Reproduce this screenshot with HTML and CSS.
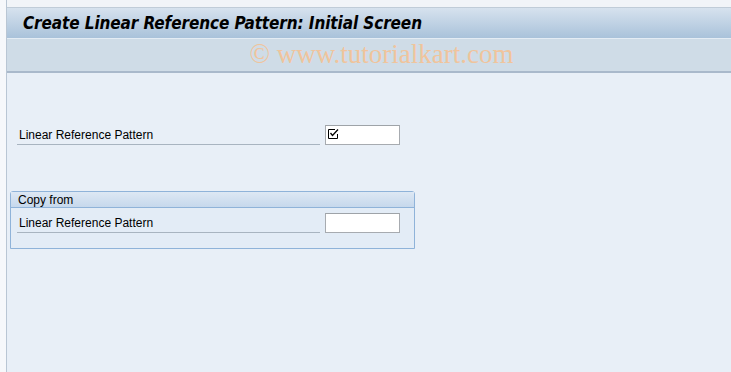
FILE: index.html
```html
<!DOCTYPE html>
<html>
<head>
<meta charset="utf-8">
<link rel="stylesheet" href="styles.css">
</head>
<body>
<div class="frame">
  <div class="topstrip"></div>
  <div class="titlebar"><span class="title">Create Linear Reference Pattern: Initial Screen</span></div>
  <div class="toolbar"><span class="watermark">© www.tutorialkart.com</span></div>
  <div class="content">
    <div class="row first">
      <span class="label">Linear Reference Pattern</span>
      <span class="input">
        <svg class="chk" width="11" height="11" viewBox="0 0 11 11">
          <path d="M0.5 1.5 H7 M0.5 1.5 V10.5 H9.5 V6" fill="none" stroke="#000" stroke-width="1"/>
          <path d="M2.5 5 L4.5 7.5 L10 1.5" fill="none" stroke="#000" stroke-width="1.3"/>
        </svg>
      </span>
    </div>
    <div class="group">
      <div class="ghead">Copy from</div>
      <div class="gbody">
        <div class="row">
          <span class="label">Linear Reference Pattern</span>
          <span class="input"></span>
        </div>
      </div>
    </div>
  </div>
</div>
</body>
</html>
```
FILE: styles.css
```css
html, body { margin: 0; padding: 0; height: 100%; }
body { background: #f6f8fb; font-family: Tahoma, "DejaVu Sans", sans-serif; }
.frame {
  margin-left: 6px;
  height: 372px;
  border-left: 1px solid #b9c6d4;
  display: flex;
  flex-direction: column;
  overflow: hidden;
}
.topstrip { height: 7px; background: #f1f4f8; border-bottom: 1px solid #c0ccd8; }
.titlebar {
  height: 30px;
  background: linear-gradient(#d6e2ee, #a9c2da);
  display: flex;
  align-items: center;
  padding-left: 16px;
  border-bottom: 1px solid #e4ecf4;
}
.title {
  font-family: "DejaVu Sans Condensed", "DejaVu Sans", sans-serif;
  font-weight: bold;
  font-style: italic;
  font-size: 17px;
  color: #000;
  letter-spacing: -0.1px;
}
.toolbar {
  height: 32px;
  background: #cfdce7;
  border-bottom: 2px solid #a9b9cb;
  display: flex;
  align-items: center;
  justify-content: center;
}
.watermark {
  font-family: "Liberation Serif", serif;
  font-size: 27px;
  color: #f0c49c;
  margin-left: 25px;
  margin-top: -2px;
}
.content {
  flex: 1;
  background: #e8eff7;
  padding: 52px 0 0 3px;
}
.row {
  display: flex;
  align-items: flex-end;
  width: 383px;
  height: 20px;
  font-family: "Liberation Sans", Arial, sans-serif;
  font-size: 12px;
  color: #000;
}
.row.first { margin-left: 7px; }
.label {
  width: 303px;
  padding: 2px 0 0 2px;
  box-sizing: border-box;
  border-bottom: 1px solid #a8b4c0;
  line-height: 17px;
  height: 20px;
}
.input {
  margin-left: auto;
  width: 75px;
  height: 20px;
  box-sizing: border-box;
  background: #fff;
  border: 1px solid #a7abb0;
  border-top-color: #9ea3a8;
  position: relative;
}
.chk { position: absolute; left: 2px; top: 2px; }
.group {
  margin-top: 46px;
  width: 405px;
  box-sizing: border-box;
  border: 1px solid #8fb3d9;
  border-radius: 3px 3px 0 0;
  background: #e3ecf6;
}
.ghead {
  height: 15px;
  line-height: 16px;
  padding-left: 7px;
  background: linear-gradient(#dde8f4, #c6d8ec);
  border-bottom: 1px solid #8fb3d9;
  font-family: "Liberation Sans", Arial, sans-serif;
  font-size: 12px;
  color: #000;
}
.gbody { padding: 5px 0 15px 6px; }
```
